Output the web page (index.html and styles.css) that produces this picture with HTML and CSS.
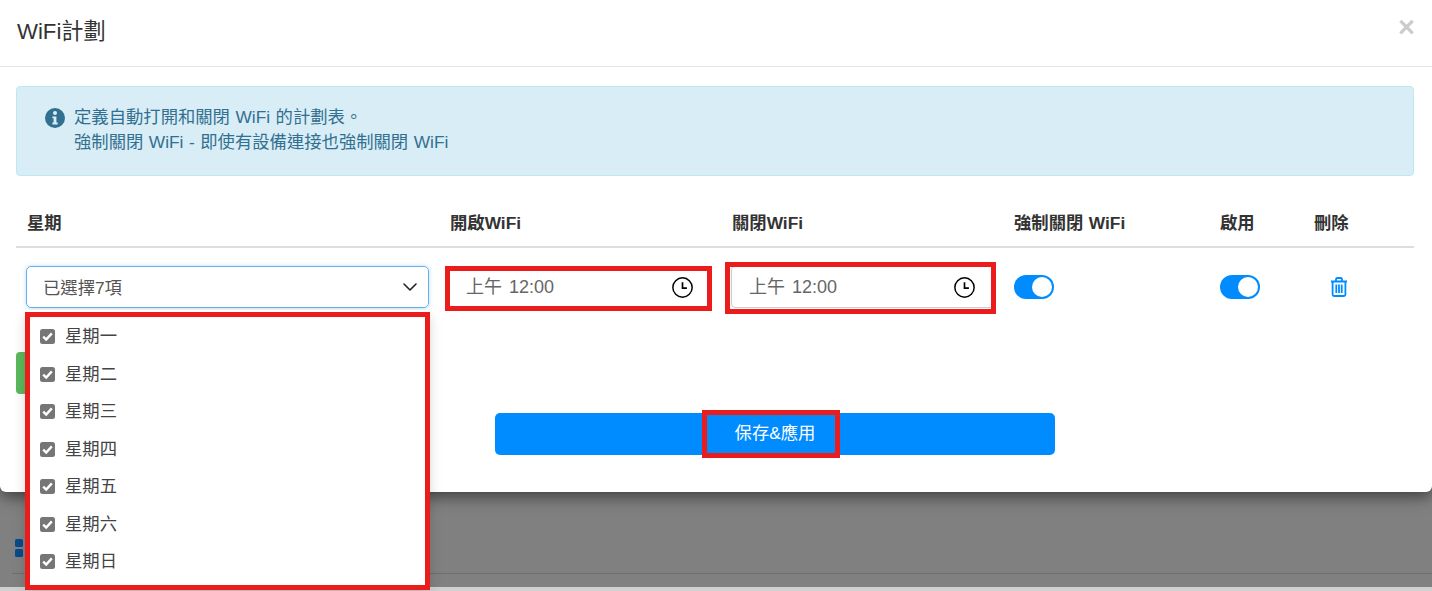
FILE: index.html
```html
<!DOCTYPE html>
<html lang="zh-Hant">
<head>
<meta charset="utf-8">
<title>WiFi計劃</title>
<link rel="stylesheet" href="styles.css">
</head>
<body>
<div class="modal">
  <header class="modal-header">
    <h4 class="modal-title">WiFi計劃</h4>
    <span class="close">×</span>
  </header>
  <div class="modal-body">
    <div class="alert">
      <svg class="info" viewBox="0 0 20 20"><circle cx="10" cy="10" r="10" fill="#31708f"/><circle cx="10" cy="5" r="2" fill="#d9edf7"/><path d="M7.4 8.4h4v6.2h1.3v1.9H7.4v-1.900h1.200v-4.300H7.400z" fill="#d9edf7"/></svg>
      <div class="alert-text">定義自動打開和關閉 WiFi 的計劃表。<br>強制關閉 WiFi - 即使有設備連接也強制關閉 WiFi</div>
    </div>
    <div class="grid head">
      <div>星期</div><div>開啟WiFi</div><div>關閉WiFi</div><div>強制關閉 WiFi</div><div>啟用</div><div>刪除</div>
    </div>
    <div class="grid row">
      <div class="select-cell">
        <div class="select">
          <span class="select-text">已選擇7項</span>
          <svg class="chev" viewBox="0 0 14 8"><path d="M1 1l6 6 6-6" fill="none" stroke="#222" stroke-width="1.6" stroke-linecap="round" stroke-linejoin="round"/></svg>
        </div>
        <ul class="dropdown">
          <li><svg class="cb" viewBox="0 0 15 15"><rect width="15" height="15" rx="2.5" fill="#767676"/><path d="M3.2 7.600l3 3 5.600-6.200" fill="none" stroke="#fff" stroke-width="2.400"/></svg>星期一</li>
          <li><svg class="cb" viewBox="0 0 15 15"><rect width="15" height="15" rx="2.5" fill="#767676"/><path d="M3.2 7.600l3 3 5.600-6.200" fill="none" stroke="#fff" stroke-width="2.400"/></svg>星期二</li>
          <li><svg class="cb" viewBox="0 0 15 15"><rect width="15" height="15" rx="2.5" fill="#767676"/><path d="M3.2 7.600l3 3 5.600-6.200" fill="none" stroke="#fff" stroke-width="2.400"/></svg>星期三</li>
          <li><svg class="cb" viewBox="0 0 15 15"><rect width="15" height="15" rx="2.5" fill="#767676"/><path d="M3.2 7.600l3 3 5.600-6.200" fill="none" stroke="#fff" stroke-width="2.400"/></svg>星期四</li>
          <li><svg class="cb" viewBox="0 0 15 15"><rect width="15" height="15" rx="2.5" fill="#767676"/><path d="M3.2 7.600l3 3 5.600-6.200" fill="none" stroke="#fff" stroke-width="2.400"/></svg>星期五</li>
          <li><svg class="cb" viewBox="0 0 15 15"><rect width="15" height="15" rx="2.5" fill="#767676"/><path d="M3.2 7.600l3 3 5.600-6.200" fill="none" stroke="#fff" stroke-width="2.400"/></svg>星期六</li>
          <li><svg class="cb" viewBox="0 0 15 15"><rect width="15" height="15" rx="2.5" fill="#767676"/><path d="M3.2 7.600l3 3 5.600-6.200" fill="none" stroke="#fff" stroke-width="2.400"/></svg>星期日</li>
        </ul>
      </div>
      <div class="time plain">
        <span>上午 12:00</span>
        <svg class="clock" viewBox="0 0 20 20"><circle cx="10" cy="10" r="9.2" fill="none" stroke="#000" stroke-width="1.4"/><path d="M10 5v5.6h4.2" fill="none" stroke="#000" stroke-width="1.6"/></svg>
      </div>
      <div class="time">
        <span>上午 12:00</span>
        <svg class="clock" viewBox="0 0 20 20"><circle cx="10" cy="10" r="9.2" fill="none" stroke="#000" stroke-width="1.4"/><path d="M10 5v5.6h4.2" fill="none" stroke="#000" stroke-width="1.6"/></svg>
      </div>
      <div class="toggle-cell"><span class="toggle"></span></div>
      <div class="toggle-cell"><span class="toggle"></span></div>
      <div class="toggle-cell">
        <svg class="trash" viewBox="0 0 18 20"><path d="M1 4.500h16M6 4.200V2.400Q6 1 7.400 1h3.200Q12 1 12 2.400v1.800M2.600 4.500v13Q2.600 19 4.100 19h9.800q1.500 0 1.500-1.500v-13M6.300 7.500v8.500M9 7.500v8.500M11.700 7.500v8.500" fill="none" stroke="#008cff" stroke-width="1.800"/></svg>
      </div>
    </div>
    <div class="add"></div>
    <button class="save">保存&amp;應用</button>
  </div>
</div>
<div class="backdrop">
  <div class="tiles"><i></i><i></i><i></i><i></i></div>
  <div class="rule"></div>
</div>
<div class="mark mark-days"></div>
<div class="mark mark-on"></div>
<div class="mark mark-off"></div>
<div class="mark mark-save"></div>
</body>
</html>
```
FILE: styles.css
```css
* { box-sizing: border-box; }
html, body { margin: 0; height: 591px; overflow: hidden; }
body {
  position: relative;
  background: #808080;
  color: #333;
  font: 17.33px/25px "Liberation Sans", "Noto Sans CJK TC", sans-serif;
}
.modal {
  position: relative;
  z-index: 2;
  height: 492px;
  background: #fff;
  border-radius: 0 0 6px 6px;
  box-shadow: 0 5px 15px rgba(0,0,0,.5);
}
.modal-header {
  display: flex;
  justify-content: space-between;
  height: 67px;
  padding: 17px 18px 0 17px;
  border-bottom: 1px solid #e5e5e5;
}
.modal-title { margin: 0; font-size: 22.2px; line-height: 30px; font-weight: 400; }
.close { margin: -3px -1px 0 0; font-size: 29px; line-height: 26px; font-weight: 700; color: #000; opacity: .2; }
.modal-body { padding: 19px 18px 0 16px; }
.alert {
  display: flex;
  gap: 9px;
  height: 90px;
  padding: 18px 28px;
  background: #d9edf7;
  border: 1px solid #bce8f1;
  border-radius: 4px;
  color: #31708f;
  word-spacing: .7px;
}
.info { width: 20px; height: 20px; margin-top: 3px; flex: none; }
.grid {
  display: grid;
  grid-template-columns: 423px 282px 282px 206px 94px 1fr;
  padding-left: 11px;
}
.head {
  height: 72px;
  padding-top: 35px;
  border-bottom: 2px solid #ddd;
  font-weight: 700;
  word-spacing: .7px;
}
.row { height: 42px; margin-top: 18px; padding-left: 10px; grid-template-columns: 424px 282px 282px 206px 94px 1fr; }
.select-cell { position: relative; }
.select {
  display: flex;
  align-items: center;
  justify-content: space-between;
  width: 403px;
  height: 42px;
  padding: 0 11px 0 16px;
  border: 1px solid #66afe9;
  border-radius: 5px;
  color: #555;
  box-shadow: 0 0 4px rgba(102,175,233,.45);
}
.select-text { padding-top: 2px; }
.chev { width: 14px; height: 8px; }
.dropdown {
  position: absolute;
  z-index: 3;
  top: 44px;
  left: 0;
  width: 403px;
  height: 275px;
  margin: 0;
  padding: 8px 0 0 14px;
  list-style: none;
  background: #fff;
  box-shadow: 0 6px 12px rgba(0,0,0,.18);
}
.dropdown li {
  display: flex;
  align-items: center;
  gap: 10px;
  height: 37.5px;
  color: #444;
}
.cb { width: 15px; height: 15px; flex: none; }
.time {
  display: flex;
  align-items: center;
  justify-content: space-between;
  width: 264px;
  height: 42px;
  margin-left: -1px;
  padding: 0 19px 0 17px;
  border: 1px solid #ccc;
  border-radius: 4px 0 0 4px;
  color: #666;
  font-size: 18px;
  word-spacing: 2px;
}
.time.plain { border-color: transparent; margin-left: -5px; padding: 0 15px 0 20px; }
.clock { width: 21px; height: 21px; }
.toggle-cell { display: flex; align-items: center; }
.toggle {
  display: block;
  position: relative;
  width: 40px;
  height: 24px;
  border-radius: 12px;
  background: #008cff;
}
.toggle::after {
  content: "";
  position: absolute;
  top: 2px;
  right: 2px;
  width: 20px;
  height: 20px;
  border-radius: 50%;
  background: #fff;
}
.trash { width: 18px; height: 20px; margin-left: 16px; }
.add {
  width: 100px;
  height: 42px;
  margin-top: 44px;
  background: #5cb85c;
  border-radius: 4px;
}
.save {
  display: block;
  width: 560px;
  height: 42px;
  margin: 19px 0 0 479px;
  padding: 0 0 2px;
  border: 0;
  border-radius: 5px;
  background: #008cff;
  color: #fff;
  font: 17.33px/25px "Liberation Sans", "Noto Sans CJK TC", sans-serif;
}
.backdrop {
  position: relative;
  height: 95px;
  padding-top: 47px;
}
.tiles {
  display: grid;
  grid-template-columns: 8px 8px;
  grid-auto-rows: 8px;
  gap: 2px;
  margin-left: 15px;
}
.tiles i { background: #084a8a; border-radius: 1.5px; }
.rule { height: 1px; margin: 16px 0 0 12px; background: #6f6f6f; }
.backdrop::after {
  content: "";
  position: absolute;
  left: 0;
  right: 0;
  top: 95px;
  height: 4px;
  background: #d0d0d0;
}
.mark { position: absolute; z-index: 4; border: 5px solid #ea1c1c; }
.mark-days { left: 25px; top: 312px; width: 405px; height: 278px; }
.mark-on { left: 445px; top: 266px; width: 267px; height: 45px; }
.mark-off { left: 725px; top: 262px; width: 271px; height: 52px; }
.mark-save { left: 702px; top: 410px; width: 138px; height: 48px; }
```
